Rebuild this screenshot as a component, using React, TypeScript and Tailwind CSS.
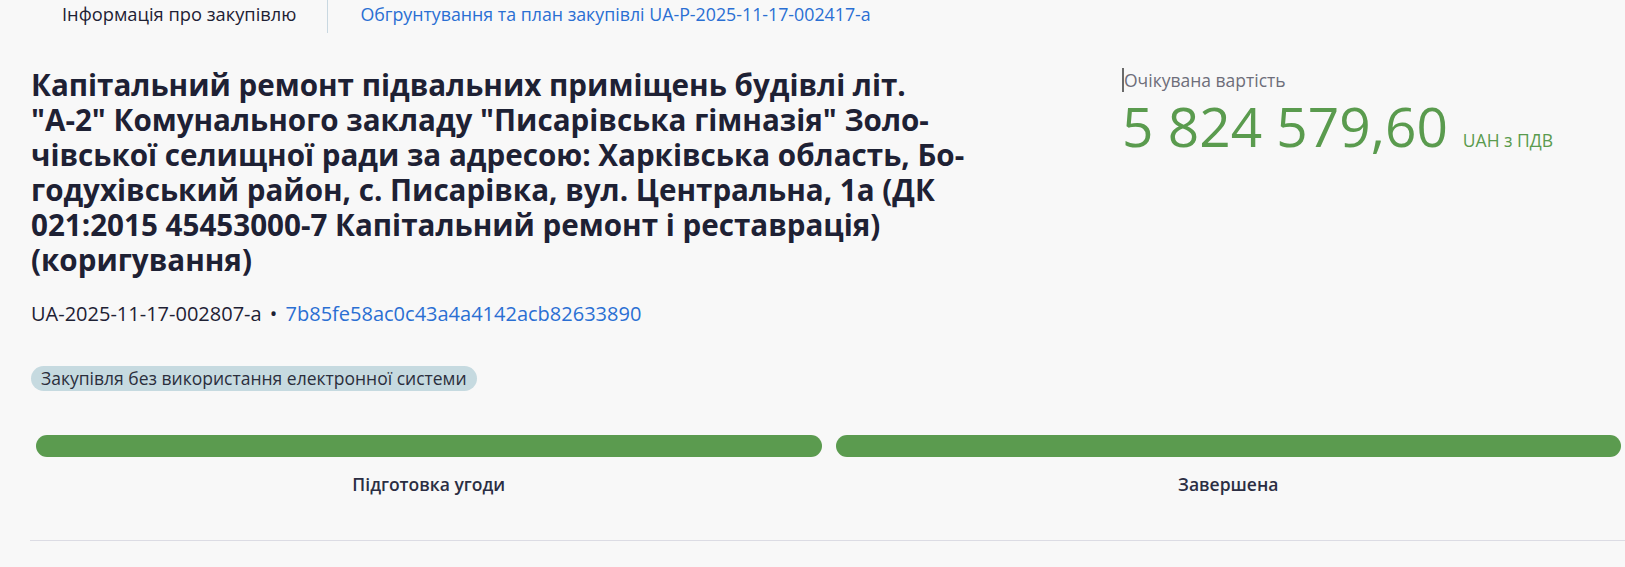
import React from "react";

export default function App() {
  return (
    <div className="w-[1625px] h-[567px] overflow-hidden bg-[#f8f8f8] font-['Open_Sans',sans-serif] text-[#1e2134]">
      {/* tabs */}
      <div className="flex h-[33px] pl-[30px]">
        <div className="pl-8 pr-[31px] pt-[2px] text-[18.3px] leading-[24px] text-[#1e2134]">Інформація про закупівлю</div>
        <div className="w-px h-[33px] bg-[#c9d8e1]" />
        <div className="px-8 pt-[2px] text-[17.8px] leading-[24px] text-[#2a6fd3]">
          Обгрунтування та план закупівлі UA-P-2025-11-17-002417-a
        </div>
      </div>

      {/* main */}
      <div className="flex pl-[31px] pt-[34px]">
        <div className="w-[942px] shrink-0">
          <h1 className="text-[29.6px] leading-[35px] font-bold text-[#1e2134]">
            Капітальний ремонт підвальних приміщень будівлі літ. "А-2" Комунального закладу "Писарівська гімназія" Золо{"\u00AD"}чівської селищної ради за адресою: Харківська область, Бо{"\u00AD"}годухівський район, с. Писарівка, вул. Центральна, 1а (ДК 021:2015 45453000-7 Капітальний ремонт і реставрація) (коригування)
          </h1>
          <div className="mt-[25px] text-[20px] leading-[24px] text-[#1e2134]">
            UA-2025-11-17-002807-a <span className="mx-[3px]">•</span>{" "}
            <span className="text-[#2a6fd3]">7b85fe58ac0c43a4a4142acb82633890</span>
          </div>
          <div className="mt-[40px] flex">
            <span className="h-[25px] rounded-full bg-[#c6dae0] px-[10px] text-[17.5px] leading-[25px] text-[#2b2e3c]">
              Закупівля без використання електронної системи
            </span>
          </div>
        </div>
        <div className="ml-[149px] pt-[1px]">
          <div className="flex items-center text-[17.5px] leading-[24px] text-[#6e6e7a]">
            <span className="w-[2px] h-[24px] bg-[#6a6a6a]" />
            Очікувана вартість
          </div>
          <div className="flex items-baseline text-[#5a9b4e]">
            <span className="text-[55px] leading-[67px]">5 824 579,60</span>
            <span className="ml-[15px] text-[17.5px]">UAH з ПДВ</span>
          </div>
        </div>
      </div>

      {/* progress */}
      <div className="mt-[44px] flex gap-[14px] pl-[36px] pr-[4px]">
        <div className="flex-1">
          <div className="h-[22px] rounded-full bg-[#5b9b4f]" />
          <div className="mt-[15px] text-center text-[17.5px] leading-[24px] font-semibold text-[#2b2e43]">Підготовка угоди</div>
        </div>
        <div className="flex-1">
          <div className="h-[22px] rounded-full bg-[#5b9b4f]" />
          <div className="mt-[15px] text-center text-[17.5px] leading-[24px] font-semibold text-[#2b2e43]">Завершена</div>
        </div>
      </div>
      <div className="mt-[44px] ml-[30px] h-px bg-[#dcdce4]" />
    </div>
  );
}
